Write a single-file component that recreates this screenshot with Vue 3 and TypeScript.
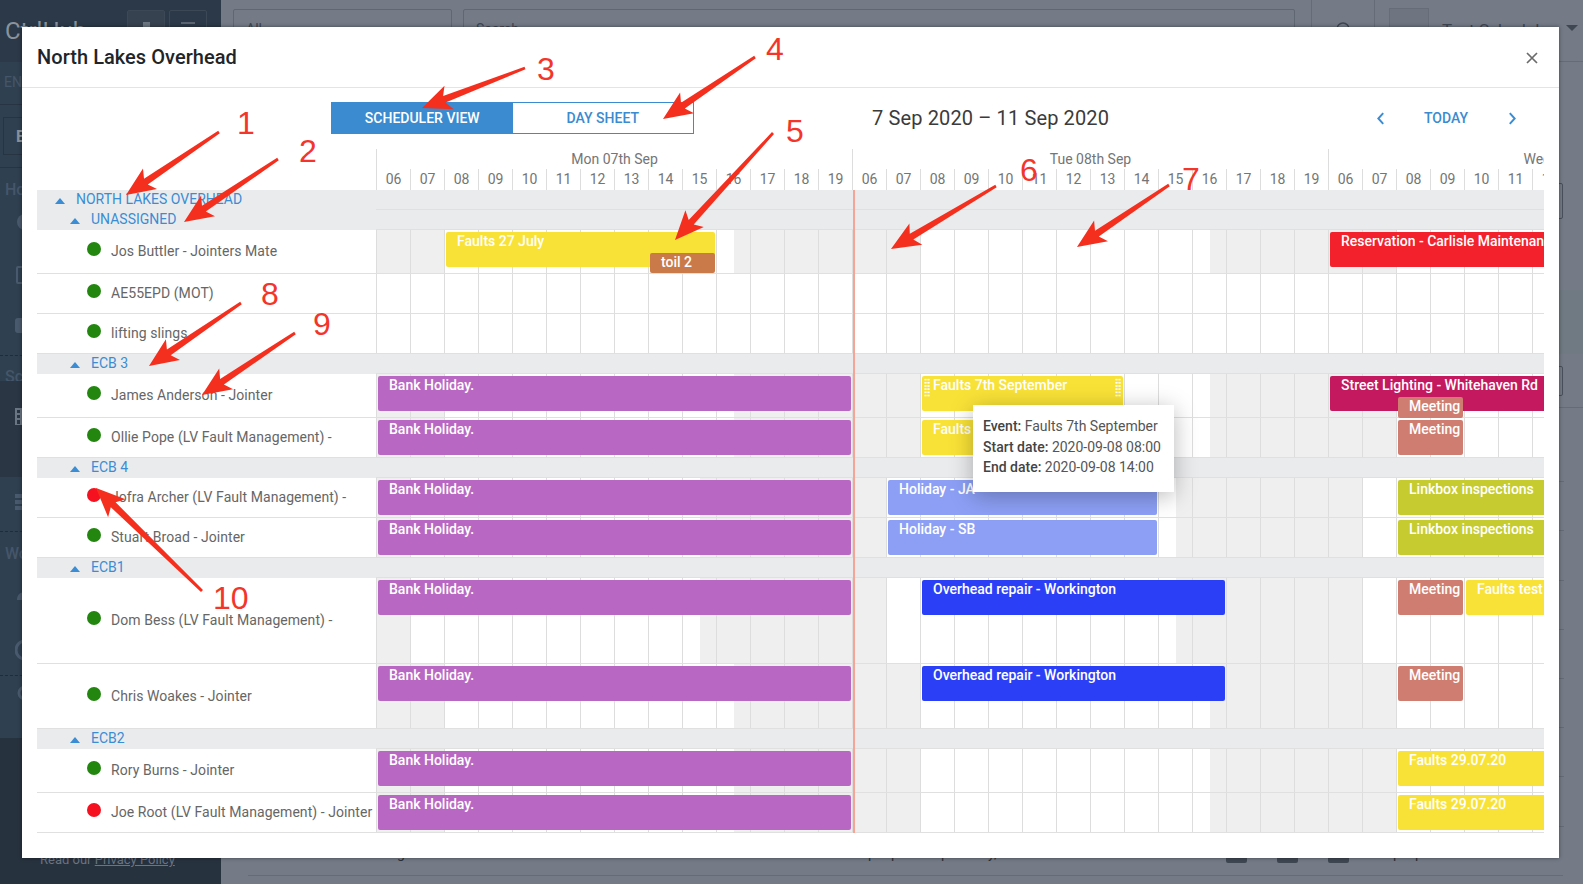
<script setup lang="ts">
type Ev = { text: string; x: number; w: number; color: string; top?: number; h?: number; handles?: boolean }
type Row = {
  kind: 'group' | 'res'
  h: number
  label: string
  level?: number
  dot?: 'green' | 'red'
  shade?: '8' | '7'
  events?: Ev[]
}

const ORIGIN = 376
const HOURS = ['06', '07', '08', '09', '10', '11', '12', '13', '14', '15', '16', '17', '18', '19']
const days = ['Mon 07th Sep', 'Tue 08th Sep', 'Wed 09th Sep']

const PURPLE = '#b868c2'
const YELLOW = '#f9e237'
const BLUE = '#2b3ff7'
const LILAC = '#8c9ff5'
const SALMON = '#cf7d70'
const LIME = '#c6cc2f'

function ev(text: string, from: number, to: number, color: string, extra: Partial<Ev> = {}): Ev {
  return { text, x: from - ORIGIN, w: to - from, color, ...extra }
}
const bank = () => ev('Bank Holiday.', 378, 851, PURPLE)

const rows: Row[] = [
  { kind: 'group', h: 20, label: 'NORTH LAKES OVERHEAD', level: 0 },
  { kind: 'group', h: 20, label: 'UNASSIGNED', level: 1 },
  {
    kind: 'res', h: 44, label: 'Jos Buttler - Jointers Mate', dot: 'green', shade: '8',
    events: [
      ev('Faults 27 July', 446, 715, YELLOW),
      ev('toil 2', 650, 715, '#c97a48', { top: 23, h: 20 }),
      ev('Reservation - Carlisle Maintenance', 1330, 1560, '#f2212b')
    ]
  },
  { kind: 'res', h: 40, label: 'AE55EPD (MOT)', dot: 'green' },
  { kind: 'res', h: 40, label: 'lifting slings', dot: 'green' },
  { kind: 'group', h: 20, label: 'ECB 3', level: 1 },
  {
    kind: 'res', h: 44, label: 'James Anderson - Jointer', dot: 'green', shade: '8',
    events: [
      bank(),
      ev('Faults 7th September', 922, 1123, YELLOW, { handles: true }),
      ev('Street Lighting - Whitehaven Rd', 1330, 1560, '#c4185f'),
      ev('Meeting', 1398, 1463, SALMON, { top: 23, h: 21 })
    ]
  },
  {
    kind: 'res', h: 40, label: 'Ollie Pope (LV Fault Management) -', dot: 'green', shade: '8',
    events: [bank(), ev('Faults 7th September', 922, 1123, YELLOW), ev('Meeting', 1398, 1463, SALMON)]
  },
  { kind: 'group', h: 20, label: 'ECB 4', level: 1 },
  {
    kind: 'res', h: 40, label: 'Jofra Archer (LV Fault Management) -', dot: 'red', shade: '7',
    events: [bank(), ev('Holiday - JA', 888, 1157, LILAC), ev('Linkbox inspections', 1398, 1560, LIME)]
  },
  {
    kind: 'res', h: 40, label: 'Stuart Broad - Jointer', dot: 'green', shade: '7',
    events: [bank(), ev('Holiday - SB', 888, 1157, LILAC), ev('Linkbox inspections', 1398, 1560, LIME)]
  },
  { kind: 'group', h: 20, label: 'ECB1', level: 1 },
  {
    kind: 'res', h: 86, label: 'Dom Bess (LV Fault Management) -', dot: 'green', shade: '7',
    events: [
      bank(),
      ev('Overhead repair - Workington', 922, 1225, BLUE),
      ev('Meeting', 1398, 1463, SALMON),
      ev('Faults test', 1466, 1560, YELLOW)
    ]
  },
  {
    kind: 'res', h: 65, label: 'Chris Woakes - Jointer', dot: 'green', shade: '8',
    events: [bank(), ev('Overhead repair - Workington', 922, 1225, BLUE), ev('Meeting', 1398, 1463, SALMON)]
  },
  { kind: 'group', h: 20, label: 'ECB2', level: 1 },
  {
    kind: 'res', h: 44, label: 'Rory Burns - Jointer', dot: 'green', shade: '8',
    events: [bank(), ev('Faults 29.07.20', 1398, 1560, YELLOW)]
  },
  {
    kind: 'res', h: 40, label: 'Joe Root (LV Fault Management) - Jointer', dot: 'red', shade: '8',
    events: [bank(), ev('Faults 29.07.20', 1398, 1560, YELLOW)]
  }
]

const shades: Record<string, number[][]> = {
  '8': [[0, 69], [358, 544], [834, 1020]],
  '7': [[0, 35], [324, 511], [800, 987]]
}

function shadeStyle(s: number[]) {
  return { left: s[0] + 'px', width: s[1] - s[0] + 'px' }
}
function eventStyle(e: Ev) {
  return {
    left: e.x + 'px',
    width: e.w + 'px',
    top: (e.top ?? 2) + 'px',
    height: (e.h ?? 35) + 'px',
    background: e.color
  }
}

const arrowDefs = [
  [219, 132, 126, 195],
  [278, 159, 184, 222],
  [525, 68, 422, 108],
  [755, 57, 663, 119],
  [773, 133, 675, 240],
  [996, 186, 891, 249],
  [1169, 185, 1077, 247],
  [241, 303, 149, 366],
  [295, 333, 202, 395],
  [202, 591, 96, 488]
]
function arrowPoints(a: number[]): string {
  const [x0, y0, x1, y1] = a
  const len = Math.hypot(x1 - x0, y1 - y0)
  const ux = (x1 - x0) / len
  const uy = (y1 - y0) / len
  const nx = -uy
  const ny = ux
  const bx = x1 - ux * 24
  const by = y1 - uy * 24
  const cx = x1 - ux * 29
  const cy = y1 - uy * 29
  const p = (x: number, y: number) => `${x.toFixed(1)},${y.toFixed(1)}`
  return [
    p(x0 + nx * 1.4, y0 + ny * 1.4),
    p(bx + nx * 3.4, by + ny * 3.4),
    p(cx + nx * 12.5, cy + ny * 12.5),
    p(x1, y1),
    p(cx - nx * 12.5, cy - ny * 12.5),
    p(bx - nx * 3.4, by - ny * 3.4),
    p(x0 - nx * 1.4, y0 - ny * 1.4)
  ].join(' ')
}
const arrows = arrowDefs.map(arrowPoints)

const numbers = [
  { t: '1', x: 237, y: 105 },
  { t: '2', x: 299, y: 133 },
  { t: '3', x: 537, y: 51 },
  { t: '4', x: 766, y: 31 },
  { t: '5', x: 786, y: 113 },
  { t: '6', x: 1020, y: 152 },
  { t: '7', x: 1182, y: 161 },
  { t: '8', x: 261, y: 276 },
  { t: '9', x: 313, y: 306 },
  { t: '10', x: 213, y: 580 }
]

const navA = [
  { kind: 'label', text: 'Home', h: 44 },
  { kind: 'home', h: 52 },
  { kind: 'clip', h: 52 },
  { kind: 'fill', h: 39 },
  { kind: 'dash', text: 'Schedule', h: 26 }
]
const navC = [
  { kind: 'blocks', h: 39 },
  { kind: 'dash', text: 'Work', h: 51 },
  { kind: 'person', h: 58 },
  { kind: 'globe', h: 35 },
  { kind: 'dash-gear', h: 40 }
]

const footBits = [
  { x: 397, t: 'g' },
  { x: 868, t: 'p' },
  { x: 891, t: 'p' },
  { x: 941, t: 'p' },
  { x: 988, t: 'y,' },
  { x: 1226, chip: true },
  { x: 1277, chip: true },
  { x: 1328, chip: true },
  { x: 1393, t: 'p' },
  { x: 1415, t: 'p' }
]
const ticks = Array.from({ length: 8 }, (_, i) => i)
</script>

<template>
  <div class="page">
    <aside class="sidebar">
      <div class="brand">
        <span class="brand-name">CtrlHub</span>
        <span class="brand-btn first"><i class="glyph-a"></i></span>
        <span class="brand-btn"><i class="glyph-b"></i></span>
      </div>
      <div class="env">ENV</div>
      <div class="env-box"><div class="env-inner">E</div></div>
      <div class="nav nav-blue nav-a">
        <div v-for="(it, i) in navA" :key="i" class="nav-item" :class="it.kind" :style="{ height: it.h + 'px' }">
          <span v-if="it.text" class="nav-text">{{ it.text }}</span>
          <svg v-if="it.kind === 'home'" class="ic" viewBox="0 0 20 20"><circle cx="10" cy="10" r="8" fill="#4a5a6e" /></svg>
          <svg v-if="it.kind === 'clip'" class="ic" viewBox="0 0 20 20"><rect x="2" y="3" width="14" height="16" rx="1" fill="none" stroke="#4a5a6e" stroke-width="2" /></svg>
          <svg v-if="it.kind === 'fill'" class="ic" viewBox="0 0 20 20"><rect x="0" y="2" width="18" height="15" rx="3" fill="#4a5a6e" /></svg>
        </div>
      </div>
      <div class="nav nav-dark">
        <svg class="ic" viewBox="0 0 20 20"><path d="M1 4h16v16H1zM1 9h16M1 14h16M6 4v16M11 4V0" fill="none" stroke="#6a7683" stroke-width="2" /></svg>
      </div>
      <div class="nav nav-blue nav-c">
        <div v-for="(it, i) in navC" :key="i" class="nav-item" :class="it.kind" :style="{ height: it.h + 'px' }">
          <span v-if="it.text" class="nav-text">{{ it.text }}</span>
          <svg v-if="it.kind === 'blocks'" class="ic" viewBox="0 0 20 20"><path d="M0 2h14v4H0zM0 8h14v4H0zM0 14h14v4H0z" fill="#4a5a6e" /></svg>
          <svg v-if="it.kind === 'person'" class="ic" viewBox="0 0 20 20"><circle cx="10" cy="6" r="3" fill="#4a5a6e" /><path d="M2 18c0-6 4-8 8-8s8 2 8 8z" fill="#4a5a6e" /></svg>
          <svg v-if="it.kind === 'globe'" class="ic" viewBox="0 0 20 20"><circle cx="10" cy="10" r="9" fill="none" stroke="#4a5a6e" stroke-width="3" /></svg>
          <svg v-if="it.kind === 'dash-gear'" class="ic" viewBox="0 0 20 20"><circle cx="10" cy="10" r="6" fill="none" stroke="#4a5a6e" stroke-width="3" /></svg>
        </div>
      </div>
      <div class="nav-rest">
        <span class="privacy">Read our <u>Privacy Policy</u></span>
      </div>
    </aside>

    <main class="back">
      <div class="topbar">
        <div class="field select">All<i class="caret-s"></i></div>
        <div class="field search">Search</div>
        <div class="bell-cell">
          <svg class="bell" viewBox="0 0 16 16"><circle cx="8" cy="8" r="6" fill="none" stroke="#3f4753" stroke-width="1.5" /></svg>
        </div>
        <div class="avatar"></div>
        <span class="username">Test Scheduler</span>
        <i class="caret-u"></i>
      </div>
      <div class="backdrop-content">
        <div class="ghost-box b1"></div>
        <div class="band"></div>
        <div class="ghost-box b2"></div>
        <div class="sep"></div>
        <div class="ticks">
          <div v-for="t in ticks" :key="t" class="tick"></div>
        </div>
        <div class="foot">
          <template v-for="(b, i) in footBits" :key="i">
            <span v-if="b.chip" class="chip" :style="{ left: b.x - 221 + 'px' }"></span>
            <span v-else class="frag" :style="{ left: b.x - 221 + 'px' }">{{ b.t }}</span>
          </template>
        </div>
        <div class="end-line"></div>
      </div>
    </main>

    <section class="modal">
      <header class="modal-head">
        <h2>North Lakes Overhead</h2>
        <svg class="close" viewBox="0 0 12 12"><path d="M1 1l10 10M11 1L1 11" stroke="#6b6b6b" stroke-width="1.7" fill="none" /></svg>
      </header>

      <div class="toolbar">
        <div class="toggle">
          <span class="tab active">SCHEDULER VIEW</span>
          <span class="tab">DAY SHEET</span>
        </div>
        <div class="range">7 Sep 2020 – 11 Sep 2020</div>
        <div class="pager">
          <svg class="chev" viewBox="0 0 8 12"><path d="M6.5 1L2 6l4.5 5" fill="none" stroke="#3a8dd4" stroke-width="1.8" /></svg>
          <span class="today">TODAY</span>
          <svg class="chev" viewBox="0 0 8 12"><path d="M1.5 1L6 6l-4.5 5" fill="none" stroke="#3a8dd4" stroke-width="1.8" /></svg>
        </div>
      </div>

      <div class="scheduler">
        <div class="head-row">
          <div class="corner"></div>
          <div class="time-head">
            <div v-for="d in days" :key="d" class="day-col">
              <div class="day-name">{{ d }}</div>
              <div class="hours">
                <span v-for="h in HOURS" :key="h" class="hour">{{ h }}</span>
              </div>
            </div>
          </div>
        </div>

        <div
          v-for="(r, i) in rows"
          :key="i"
          class="row"
          :class="r.kind"
          :style="{ height: r.h + 'px' }"
        >
          <div class="row-label">
            <template v-if="r.kind === 'group'">
              <span class="tri" :class="'lv' + r.level"></span>
              <span class="group-name">{{ r.label }}</span>
            </template>
            <template v-else>
              <span class="dot" :class="r.dot"></span>
              <span class="res-name">{{ r.label }}</span>
            </template>
          </div>
          <div class="track">
            <template v-if="r.kind === 'res'">
              <div
                v-for="(s, j) in shades[r.shade ?? ''] ?? []"
                :key="j"
                class="shade"
                :style="shadeStyle(s)"
              ></div>
              <div class="grid"></div>
              <div
                v-for="(e, j) in r.events ?? []"
                :key="'e' + j"
                class="event"
                :style="eventStyle(e)"
              >
                <i v-if="e.handles" class="handle left"></i>
                {{ e.text }}
                <i v-if="e.handles" class="handle right"></i>
              </div>
            </template>
          </div>
        </div>

        <div class="now"></div>

        <div class="tip">
          <div><b>Event:</b> Faults 7th September</div>
          <div><b>Start date:</b> 2020-09-08 08:00</div>
          <div><b>End date:</b> 2020-09-08 14:00</div>
        </div>
      </div>
    </section>

    <svg class="notes" viewBox="0 0 1583 884" aria-hidden="true">
      <polygon v-for="(p, i) in arrows" :key="i" :points="p" fill="#f52f1e" />
    </svg>
    <span
      v-for="n in numbers"
      :key="n.t"
      class="num"
      :style="{ left: n.x + 'px', top: n.y + 'px' }"
    >{{ n.t }}</span>
  </div>
</template>

<style>
html, body { margin: 0; padding: 0; overflow: hidden; }
</style>

<style scoped>
.page {
  position: relative;
  width: 1583px;
  height: 884px;
  overflow: hidden;
  display: flex;
  font-family: Roboto, "Liberation Sans", sans-serif;
  background: #747b87;
}

/* backdrop: sidebar */
.sidebar {
  width: 221px;
  flex: none;
  height: 884px;
  display: flex;
  flex-direction: column;
  background: #27323f;
  color: #45566a;
  font-size: 16px;
}
.brand {
  height: 62px;
  flex: none;
  display: flex;
  align-items: flex-start;
  background: #2c3948;
  position: relative;
  box-sizing: border-box;
  padding-top: 10px;
}
.brand-name {
  position: absolute;
  left: 5px;
  top: 17px;
  color: #8a939d;
  font-size: 24px;
}
.brand-btn {
  width: 38px;
  height: 38px;
  margin-left: 4px;
  box-sizing: border-box;
  border: 1px solid #3c4855;
  border-radius: 2px;
  display: flex;
  justify-content: center;
  padding-top: 11px;
}
.brand-btn.first { margin-left: 127px; background: #36424f; }
.glyph-a { width: 7px; height: 10px; background: #6c7681; }
.glyph-b { width: 14px; height: 2px; background: #5c6672; }
.env {
  height: 43px;
  flex: none;
  box-sizing: border-box;
  padding: 12px 0 0 4px;
  font-size: 14px;
  background: #2f4050;
  border-bottom: 1px solid #273442;
}
.env-box {
  height: 63px;
  flex: none;
  box-sizing: border-box;
  padding: 12px 3px;
  background: #2f4050;
  border-bottom: 1px solid #273442;
}
.env-inner {
  height: 38px;
  box-sizing: border-box;
  border: 1px solid #273442;
  padding: 9px 0 0 12px;
  color: #8a939d;
  font-size: 16px;
  font-weight: 700;
}
.nav { flex: none; box-sizing: border-box; }
.nav-blue { background: #2f4050; }
.nav-a { height: 213px; }
.nav-dark { height: 96px; background: #2a3644; padding: 24px 0 0 15px; }
.nav-c { height: 261px; padding-top: 15px; }
.nav-item { box-sizing: border-box; padding-left: 15px; }
.nav-text {
  display: block;
  margin-left: -10px;
  font-size: 16px;
  font-weight: 500;
}
.nav-item.label { padding-top: 12px; }
.nav-item.dash { border-top: 1px dashed #222c38; padding-top: 11px; }
.nav-c .nav-item.dash { padding-top: 12px; }
.nav-item.dash-gear { border-top: 1px dashed #222c38; padding-top: 7px; }
.ic { display: block; width: 20px; height: 20px; }
.nav-rest {
  flex: 1;
  position: relative;
}
.privacy {
  position: absolute;
  left: 40px;
  top: 114px;
  font-size: 13px;
  color: #6b7683;
  white-space: nowrap;
}

/* backdrop: main */
.back { flex: 1; display: flex; flex-direction: column; min-width: 0; color: #3f4753; }
.topbar {
  height: 62px;
  flex: none;
  box-sizing: border-box;
  border-bottom: 1px solid #656c77;
  display: flex;
  align-items: flex-start;
  padding-left: 12px;
}
.field {
  height: 38px;
  margin-top: 9px;
  box-sizing: border-box;
  border: 1px solid #5f6773;
  border-radius: 2px;
  padding: 11px 12px;
  font-size: 14px;
  position: relative;
}
.select { width: 219px; }
.search { width: 832px; margin-left: 11px; }
.caret-s {
  position: absolute;
  right: 10px;
  top: 17px;
  border: 4px solid transparent;
  border-top-color: #3f4753;
}
.bell-cell {
  width: 64px;
  height: 61px;
  margin-left: 16px;
  box-sizing: border-box;
  border-left: 1px solid #656c77;
  border-right: 1px solid #656c77;
  display: flex;
  justify-content: center;
  padding-top: 21px;
}
.bell { width: 16px; height: 16px; }
.avatar {
  width: 40px;
  height: 36px;
  margin: 8px 0 0 14px;
  box-sizing: border-box;
  border: 1px solid #666d78;
  background: #6e7581;
}
.username { margin: 20px 0 0 13px; font-size: 17px; }
.caret-u {
  margin: 25px 0 0 12px;
  border: 6px solid transparent;
  border-top-color: #3f4753;
  border-bottom: 0;
}
.backdrop-content { flex: 1; display: flex; flex-direction: column; min-height: 0; }
.ghost-box {
  align-self: flex-end;
  margin-right: 20px;
  width: 40px;
  box-sizing: border-box;
  border: 1px solid #4a515d;
  border-radius: 2px;
}
.b1 { height: 36px; margin-top: 121px; }
.band { height: 64px; margin-top: 71px; background: #6f7a82; }
.b2 { height: 30px; margin-top: 12px; }
.sep { height: 1px; margin-top: 11px; background: #656c77; }
.ticks { margin-top: 25px; }
.tick {
  height: 49.2px;
  box-sizing: border-box;
  border-bottom: 1px solid #656c77;
  margin-left: 1338px;
  margin-right: 19px;
}
.foot { height: 22px; margin-top: 14px; position: relative; }
.chip { position: absolute; top: 0; width: 21px; height: 22px; border-radius: 2px; background: #3f4753; }
.frag { position: absolute; top: 0; font-size: 14px; line-height: 24px; color: #2b3038; }
.end-line { height: 1px; margin: 12px 20px 0 27px; background: #656c77; }

/* modal */
.modal {
  position: absolute;
  left: 22px;
  top: 27px;
  width: 1537px;
  height: 831px;
  background: #fff;
  box-shadow: 0 0 4px rgba(0, 0, 0, .45);
  display: flex;
  flex-direction: column;
}
.modal-head {
  height: 61px;
  flex: none;
  box-sizing: border-box;
  border-bottom: 1px solid #e4e4e4;
  display: flex;
  align-items: center;
  justify-content: space-between;
  padding: 0 21px 0 15px;
}
.modal-head h2 {
  margin: 0;
  font-size: 20px;
  font-weight: 500;
  letter-spacing: .05px;
  color: #212529;
}
.close { width: 12px; height: 12px; margin-top: 2px; }
.toolbar {
  height: 61px;
  flex: none;
  display: flex;
  align-items: flex-start;
  padding: 14px 0 0 309px;
  box-sizing: border-box;
}
.toggle {
  display: flex;
  width: 363px;
  height: 32px;
  box-sizing: border-box;
  border: 1px solid #3a8bd0;
  flex: none;
}
.tab {
  flex: 1;
  display: flex;
  align-items: center;
  justify-content: center;
  font-size: 14px;
  font-weight: 500;
  color: #3a8bd0;
}
.tab.active { background: #3a8bd0; color: #fff; }
.range {
  margin-left: 178px;
  width: 514px;
  font-size: 20px;
  line-height: 32px;
  letter-spacing: .13px;
  color: #3b3b3b;
  white-space: nowrap;
}
.pager {
  display: flex;
  align-items: center;
  height: 32px;
}
.chev { width: 9px; height: 13px; display: block; }
.pager .chev:first-child { margin-left: -10px; }
.today {
  margin: 0 40px 0 39px;
  font-size: 14px;
  font-weight: 500;
  color: #3a8bd0;
}

.scheduler {
  position: relative;
  margin: 0 15px;
  overflow: hidden;
  flex: none;
  height: 684px;
}
.head-row { height: 41px; display: flex; }
.corner { width: 339px; flex: none; }
.time-head { display: flex; width: 1168px; overflow: hidden; }
.day-col { width: 476px; flex: none; box-sizing: border-box; border-left: 1px solid #ddd; }
.day-name {
  height: 20px;
  line-height: 20px;
  text-align: center;
  font-size: 14px;
  color: #757575;
  white-space: nowrap;
}
.hours { display: flex; height: 21px; margin-left: -1px; }
.hour {
  width: 34px;
  flex: none;
  box-sizing: border-box;
  border-left: 1px solid #ddd;
  text-align: center;
  font-size: 14px;
  line-height: 21px;
  color: #757575;
}
.row { display: flex; }
.row-label {
  width: 339px;
  flex: none;
  box-sizing: border-box;
  display: flex;
  align-items: center;
  border-bottom: 1px solid #e0e0e0;
  font-size: 14px;
  white-space: nowrap;
}
.group .row-label { background: #eaebed; border-bottom: 0; }
.tri {
  width: 0;
  height: 0;
  border-left: 5px solid transparent;
  border-right: 5px solid transparent;
  border-bottom: 6px solid #3a8dd4;
}
.tri.lv0 { margin: 1px 11px 0 18px; }
.tri.lv1 { margin: 1px 11px 0 33px; }
.group-name { color: #3a8dd4; font-weight: 400; margin-bottom: 2px; }
.dot {
  width: 14px;
  height: 14px;
  border-radius: 50%;
  margin: -5px 10px 0 50px;
  flex: none;
}
.dot.green { background: #23860f; }
.dot.red { background: #f5111f; }
.res-name { color: #666; letter-spacing: .06px; margin-bottom: 1px; }
.track {
  width: 1168px;
  flex: none;
  position: relative;
  box-sizing: border-box;
  border-bottom: 1px solid #e0e0e0;
}
.group .track { background: #eaebed; }
.shade { position: absolute; top: 0; bottom: 0; background: #efefef; }
.grid {
  position: absolute;
  inset: 0;
  background: linear-gradient(to right, #ddd 1px, transparent 1px) 0 0 / 34px 100%;
}
.event {
  position: absolute;
  box-sizing: border-box;
  padding-left: 11px;
  border-radius: 2px;
  color: #fff;
  font-size: 14px;
  font-weight: 500;
  line-height: 18px;
  white-space: nowrap;
  overflow: hidden;
}
.handle {
  position: absolute;
  top: 2px;
  width: 6px;
  height: 19px;
  background: radial-gradient(circle, #fff 1px, transparent 1.2px) 0 0 / 3px 3.2px;
}
.handle.left { left: 2px; }
.handle.right { right: 2px; }
.now {
  position: absolute;
  left: 816px;
  top: 41px;
  width: 2px;
  height: 643px;
  background: #f4a595;
}
.tip {
  position: absolute;
  left: 936px;
  top: 256px;
  width: 201px;
  height: 87px;
  box-sizing: border-box;
  padding: 11px 10px;
  background: #fff;
  box-shadow: 0 4px 22px rgba(0, 0, 0, .28);
  font-size: 14px;
  line-height: 20.6px;
  color: #555;
  white-space: nowrap;
}
.tip b { font-weight: 500; color: #444; }

/* annotations */
.notes {
  position: absolute;
  left: 0;
  top: 0;
  width: 1583px;
  height: 884px;
  pointer-events: none;
}
.num {
  position: absolute;
  font-family: "Liberation Sans", sans-serif;
  font-size: 32px;
  line-height: 36px;
  color: #f3352b;
}
</style>
